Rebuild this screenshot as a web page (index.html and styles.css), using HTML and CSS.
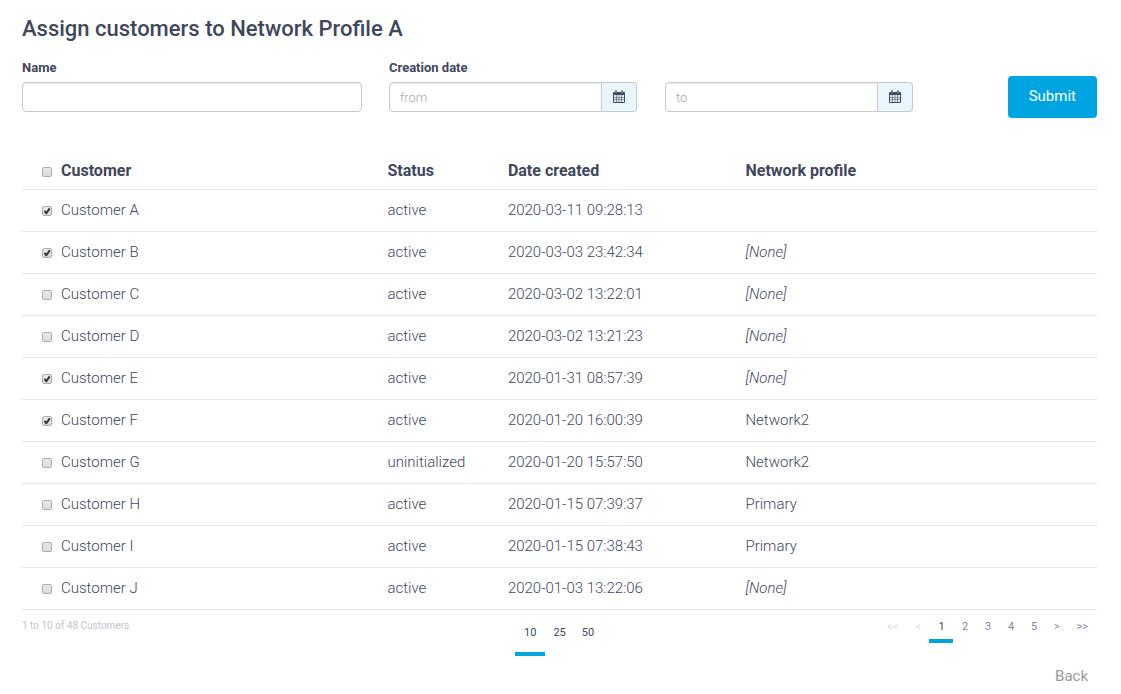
FILE: index.html
```html
<!DOCTYPE html>
<html lang="en">
<head>
<meta charset="utf-8">
<title>Assign customers</title>
<link rel="stylesheet" href="styles.css">
</head>
<body>
<svg class="sprite" aria-hidden="true">
  <symbol id="calendar" viewBox="0 0 12 13">
    <path fill="currentColor" fill-rule="evenodd" d="M1 2h1V1.200Q2 .2 3 .2T4 1.200V2h4V1.200Q8 .2 9 .2t1 1V2h1q1 0 1 1v9q0 1-1 1H1q-1 0-1-1V3q0-1 1-1zM1 5v1.900h1.900V5zm2.600 0v1.900h2.100V5zm2.700 0v1.900h2.100V5zm2.800 0v1.900H11V5zM1 7.600v1.800h1.900V7.600zm2.600 0v1.800h2.100V7.600zm2.700 0v1.800h2.100V7.600zm2.800 0v1.800H11V7.600zM1 10.100V12h1.900v-1.900zm2.600 0V12h2.100v-1.900zm2.700 0V12h2.100v-1.900zm2.800 0V12H11v-1.900zM2.700 1.200v2h.6v-2zm6 0v2h.6v-2z"/>
  </symbol>
</svg>
<main class="page">
  <h1 class="title">Assign customers to Network Profile A</h1>

  <form class="filters">
    <div class="field">
      <label class="field-label" for="name">Name</label>
      <input class="text-input" id="name" type="text">
    </div>
    <div class="field">
      <label class="field-label" for="from">Creation date</label>
      <div class="date-group">
        <input class="text-input date-input" id="from" type="text" placeholder="from">
        <button class="date-button" type="button" aria-label="Pick start date"><svg class="icon"><use href="#calendar"/></svg></button>
      </div>
    </div>
    <div class="field">
      <div class="date-group">
        <input class="text-input date-input" id="to" type="text" placeholder="to" aria-label="Creation date to">
        <button class="date-button" type="button" aria-label="Pick end date"><svg class="icon"><use href="#calendar"/></svg></button>
      </div>
    </div>
    <button class="submit" type="submit">Submit</button>
  </form>

  <table class="customers">
    <thead>
      <tr>
        <th class="col-customer"><label class="pick"><input class="tick" type="checkbox">Customer</label></th>
        <th class="col-status">Status</th>
        <th class="col-date">Date created</th>
        <th class="col-profile">Network profile</th>
      </tr>
    </thead>
    <tbody>
      <tr><td><label class="pick"><input class="tick" type="checkbox" checked>Customer A</label></td><td>active</td><td>2020-03-11 09:28:13</td><td></td></tr>
      <tr><td><label class="pick"><input class="tick" type="checkbox" checked>Customer B</label></td><td>active</td><td>2020-03-03 23:42:34</td><td><em>[None]</em></td></tr>
      <tr><td><label class="pick"><input class="tick" type="checkbox">Customer C</label></td><td>active</td><td>2020-03-02 13:22:01</td><td><em>[None]</em></td></tr>
      <tr><td><label class="pick"><input class="tick" type="checkbox">Customer D</label></td><td>active</td><td>2020-03-02 13:21:23</td><td><em>[None]</em></td></tr>
      <tr><td><label class="pick"><input class="tick" type="checkbox" checked>Customer E</label></td><td>active</td><td>2020-01-31 08:57:39</td><td><em>[None]</em></td></tr>
      <tr><td><label class="pick"><input class="tick" type="checkbox" checked>Customer F</label></td><td>active</td><td>2020-01-20 16:00:39</td><td>Network2</td></tr>
      <tr><td><label class="pick"><input class="tick" type="checkbox">Customer G</label></td><td>uninitialized</td><td>2020-01-20 15:57:50</td><td>Network2</td></tr>
      <tr><td><label class="pick"><input class="tick" type="checkbox">Customer H</label></td><td>active</td><td>2020-01-15 07:39:37</td><td>Primary</td></tr>
      <tr><td><label class="pick"><input class="tick" type="checkbox">Customer I</label></td><td>active</td><td>2020-01-15 07:38:43</td><td>Primary</td></tr>
      <tr><td><label class="pick"><input class="tick" type="checkbox">Customer J</label></td><td>active</td><td>2020-01-03 13:22:06</td><td><em>[None]</em></td></tr>
    </tbody>
  </table>

  <div class="table-footer">
    <p class="summary">1 to 10 of 48 Customers</p>
    <nav class="sizes" aria-label="Rows per page">
      <a class="size current" href="#">10</a>
      <a class="size" href="#">25</a>
      <a class="size" href="#">50</a>
    </nav>
    <nav class="pages" aria-label="Pages">
      <a class="page-link disabled" href="#">&lt;&lt;</a>
      <a class="page-link disabled" href="#">&lt;</a>
      <a class="page-link current" href="#">1</a>
      <a class="page-link" href="#">2</a>
      <a class="page-link" href="#">3</a>
      <a class="page-link" href="#">4</a>
      <a class="page-link" href="#">5</a>
      <a class="page-link" href="#">&gt;</a>
      <a class="page-link" href="#">&gt;&gt;</a>
    </nav>
  </div>

  <div class="actions"><a class="back" href="#">Back</a></div>
</main>
</body>
</html>
```

FILE: styles.css
```css
* { box-sizing: border-box; }

body {
  margin: 0;
  background: #fff;
  color: #40465c;
  font-family: Roboto, "Liberation Sans", sans-serif;
  font-size: 15px;
  font-weight: 300;
  line-height: 20px;
}

a { color: inherit; text-decoration: none; }

.sprite { display: none; }

.page { padding: 15px 24px 0 22px; }

.title {
  margin: 0;
  font-size: 22px;
  font-weight: 500;
  line-height: 28px;
}

.filters {
  display: grid;
  grid-template-columns: 367fr 276fr 276fr 156fr;
  align-items: end;
  margin-top: 9px;
}

.field {
  display: flex;
  flex-direction: column;
  padding: 6px 28px 6px 0;
}

.field:first-child { padding-right: 27px; }

.field-label {
  margin-bottom: 4px;
  font-size: 13px;
  font-weight: 700;
  line-height: 20px;
}

.text-input {
  width: 100%;
  height: 30px;
  padding: 0 10px;
  border: 1px solid #c8c8c8;
  border-radius: 4px;
  background: #fff;
  box-shadow: inset 0 1px 1px rgba(0, 0, 0, .08);
  color: inherit;
  font: inherit;
  font-size: 13px;
}

.text-input::placeholder { color: #a8a8a8; opacity: 1; }

.date-group { display: flex; }

.date-input {
  flex: 1;
  min-width: 0;
  border-radius: 4px 0 0 4px;
}

.date-button {
  display: flex;
  align-items: center;
  justify-content: center;
  width: 35px;
  height: 30px;
  padding: 0 0 2px;
  border: 1px solid #c8c8c8;
  border-left: 0;
  border-radius: 0 4px 4px 0;
  background: #e8f6fd;
  color: #43495e;
}

.icon { width: 12px; height: 13px; }

.submit {
  justify-self: end;
  height: 42px;
  padding: 0 21px 2px;
  border: 0;
  border-radius: 4px;
  background: #00a4e0;
  color: #fff;
  font: inherit;
  font-weight: 400;
}

.customers {
  width: 100%;
  margin-top: 35px;
  border-collapse: collapse;
  table-layout: fixed;
}

.customers th,
.customers td {
  height: 42px;
  padding: 0;
  border-bottom: 1px solid #e6e6e6;
  text-align: left;
  vertical-align: middle;
}

.customers th {
  height: 36px;
  font-size: 16px;
  font-weight: 700;
}

.col-customer { width: 34%; }
.col-status { width: 11.2%; }
.col-date { width: 22.1%; }

.pick {
  display: flex;
  align-items: center;
  gap: 9px;
  padding-left: 20px;
}

.tick {
  appearance: none;
  width: 10px;
  height: 10px;
  margin: 2px 0 0;
  border: 1px solid #adadad;
  border-radius: 2px;
  background: linear-gradient(#e8e8e8, #dcdcdc);
}

.tick:checked::before {
  content: "";
  display: block;
  width: 8px;
  height: 8px;
  background: #333;
  clip-path: polygon(10% 54%, 26% 40%, 42% 56%, 74% 8%, 94% 24%, 48% 90%, 34% 90%);
}

.table-footer {
  display: grid;
  grid-template-columns: 493fr 291fr 291fr;
  align-items: start;
  font-size: 11px;
}

.summary {
  margin: 6px 0 0;
  color: #c3c4cb;
  font-size: 10px;
  font-weight: 400;
}

.sizes, .pages { display: flex; font-weight: 400; }

.size {
  padding: 13px 8px 9px;
  border-bottom: 4px solid transparent;
  line-height: 20px;
}

.size.current { padding-right: 9px; padding-left: 9px; }

.pages {
  justify-content: flex-end;
  padding-right: 1px;
  color: #82869a;
}

.page-link {
  min-width: 23px;
  padding: 7px 8px 2px;
  border-bottom: 4px solid transparent;
  text-align: center;
}

.page-link.disabled { color: #dcdce0; }
.page-link.current { min-width: 24px; color: #43495e; }
.current { border-bottom-color: #00a4e0; }

.actions {
  display: flex;
  justify-content: flex-end;
  padding: 10px 9px 8px 0;
}

.back { color: #999; font-weight: 400; }
```
